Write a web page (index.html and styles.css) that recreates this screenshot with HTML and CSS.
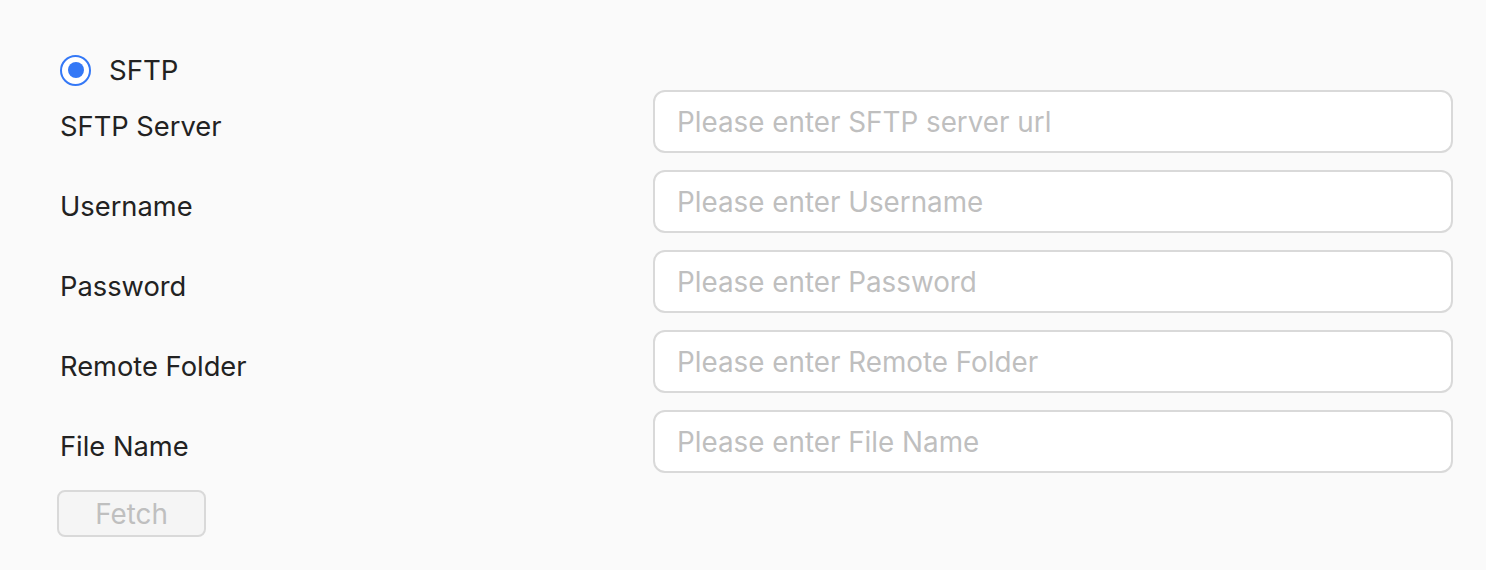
FILE: index.html
```html
<!DOCTYPE html>
<html>
<head>
<meta charset="utf-8">
<link rel="stylesheet" href="styles.css">
</head>
<body>
<div class="page">
  <label class="radio">
    <span class="radio-circle"><span class="radio-dot"></span></span>
    <span class="radio-text">SFTP</span>
  </label>
  <div class="form">
    <div class="label">SFTP Server</div>
    <div class="input">Please enter SFTP server url</div>
    <div class="label">Username</div>
    <div class="input">Please enter Username</div>
    <div class="label">Password</div>
    <div class="input">Please enter Password</div>
    <div class="label">Remote Folder</div>
    <div class="input">Please enter Remote Folder</div>
    <div class="label">File Name</div>
    <div class="input">Please enter File Name</div>
  </div>
  <button class="btn">Fetch</button>
</div>
</body>
</html>
```
FILE: styles.css
```css
html, body {
  margin: 0;
  padding: 0;
  background: #fafafa;
  font-family: Inter, "Noto Sans", sans-serif;
}
.page {
  padding: 54px 33px 0 60px;
  display: flex;
  flex-direction: column;
  align-items: flex-start;
}
.radio {
  display: flex;
  align-items: center;
  gap: 18px;
  height: 32px;
}
.radio-circle {
  width: 31px;
  height: 31px;
  box-sizing: border-box;
  border: 2px solid #3478f6;
  border-radius: 50%;
  display: flex;
  align-items: center;
  justify-content: center;
  background: #fff;
}
.radio-dot {
  width: 16px;
  height: 16px;
  border-radius: 50%;
  background: #3478f6;
}
.radio-text {
  font-size: 27.6px;
  color: #222;
}
.form {
  margin-top: 4px;
  display: grid;
  grid-template-columns: 593px 800px;
  grid-auto-rows: 63px;
  row-gap: 17px;
  width: 100%;
}
.label {
  font-size: 27.3px;
  color: #222;
  display: flex;
  align-items: center;
  padding-top: 9px;
  box-sizing: border-box;
}
.input {
  box-sizing: border-box;
  border: 2px solid #d9d9d9;
  border-radius: 12px;
  background: #fff;
  font-size: 27.8px;
  color: #bfbfbf;
  display: flex;
  align-items: center;
  padding: 0 22px;
}
.btn {
  margin-top: 17px;
  margin-left: -3px;
  width: 149px;
  height: 47px;
  border: 2px solid #d9d9d9;
  border-radius: 8px;
  background: #f5f5f5;
  color: #bfbfbf;
  font-family: Inter, sans-serif;
  font-size: 27.8px;
  padding: 0;
}
```
